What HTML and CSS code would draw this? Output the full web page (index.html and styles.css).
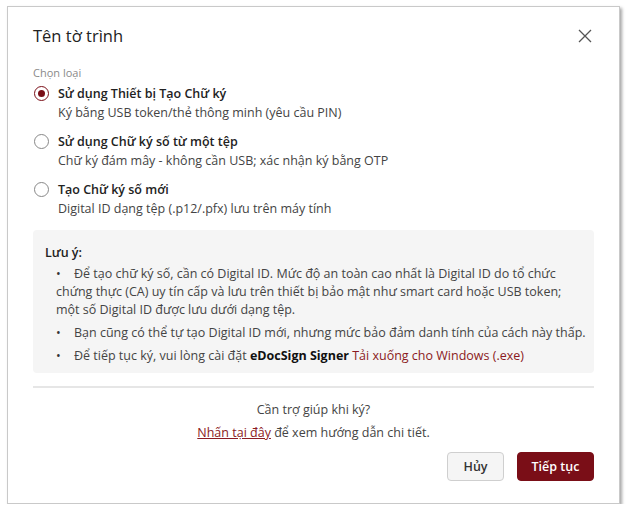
FILE: index.html
```html
<!DOCTYPE html>
<html lang="vi">
<head>
<meta charset="utf-8">
<title>Tên tờ trình</title>
<link rel="stylesheet" href="styles.css">
</head>
<body>
<div class="dialog">
  <div class="header">
    <h1 class="title">Tên tờ trình</h1>
    <button class="close" aria-label="Đóng">
      <svg width="14" height="14" viewBox="0 0 14 14"><path d="M1 1L13 13M13 1L1 13" stroke="#555" stroke-width="1.3" fill="none"/></svg>
    </button>
  </div>
  <div class="body">
    <div class="field-label">Chọn loại</div>
    <div class="options">
      <div class="option">
        <span class="radio checked"></span>
        <div class="opt-text">
          <div class="opt-title">Sử dụng Thiết bị Tạo Chữ ký</div>
          <div class="opt-desc">Ký bằng USB token/thẻ thông minh (yêu cầu PIN)</div>
        </div>
      </div>
      <div class="option">
        <span class="radio"></span>
        <div class="opt-text">
          <div class="opt-title">Sử dụng Chữ ký số từ một tệp</div>
          <div class="opt-desc">Chữ ký đám mây - không cần USB; xác nhận ký bằng OTP</div>
        </div>
      </div>
      <div class="option">
        <span class="radio"></span>
        <div class="opt-text">
          <div class="opt-title">Tạo Chữ ký số mới</div>
          <div class="opt-desc">Digital ID dạng tệp (.p12/.pfx) lưu trên máy tính</div>
        </div>
      </div>
    </div>
    <div class="note">
      <div class="note-title">Lưu ý:</div>
      <ul class="note-list">
        <li>Để tạo chữ ký số, cần có Digital ID. Mức độ an toàn cao nhất là Digital ID do tổ chức chứng thực (CA) uy tín cấp và lưu trên thiết bị bảo mật như smart card hoặc USB token; một số Digital ID được lưu dưới dạng tệp.</li>
        <li>Bạn cũng có thể tự tạo Digital ID mới, nhưng mức bảo đảm danh tính của cách này thấp.</li>
        <li>Để tiếp tục ký, vui lòng cài đặt <strong>eDocSign Signer</strong> <a class="link" href="#">Tải xuống cho Windows (.exe)</a></li>
      </ul>
    </div>
    <div class="divider"></div>
    <div class="help">
      <div>Cần trợ giúp khi ký?</div>
      <div><a class="link underline" href="#">Nhấn tại đây</a> để xem hướng dẫn chi tiết.</div>
    </div>
    <div class="actions">
      <button class="btn btn-secondary">Hủy</button>
      <button class="btn btn-primary">Tiếp tục</button>
    </div>
  </div>
</div>
</body>
</html>
```
FILE: styles.css
```css
* { box-sizing: border-box; }
html, body { margin: 0; padding: 0; background: #fff; }
body {
  font-family: "Open Sans", "Noto Sans", sans-serif;
  color: #333;
  font-size: 12.5px;
}
.dialog {
  margin: 6px 0 0 7px;
  width: 613px;
  height: 498px;
  border: 1px solid #c9c9c9;
  box-shadow: 2px 2px 3px rgba(0,0,0,0.35);
  background: #fff;
  display: flex;
  flex-direction: column;
}
.header {
  display: flex;
  align-items: center;
  justify-content: space-between;
  padding: 18px 25px 0 25px;
}
.title {
  margin: 0;
  font-size: 16.5px;
  font-weight: 400;
  line-height: 22px;
  color: #222;
}
.close {
  border: 0;
  background: none;
  padding: 0;
  margin-right: 2px;
  width: 14px;
  height: 14px;
  display: flex;
}
.body {
  padding: 18px 25px 22px 25px;
  display: flex;
  flex-direction: column;
  flex: 1;
}
.field-label {
  font-size: 11px;
  line-height: 16px;
  color: #8a8a8a;
}
.options {
  display: flex;
  flex-direction: column;
  gap: 10px;
  margin-top: 3px;
}
.option {
  display: flex;
  align-items: flex-start;
  gap: 9px;
}
.radio {
  flex: none;
  width: 15px;
  height: 15px;
  margin: 2px 0 0 1px;
  border: 1px solid #888;
  border-radius: 50%;
  background: #fff;
  position: relative;
}
.radio.checked {
  border: 1.5px solid #7a0e17;
}
.radio.checked::after {
  content: "";
  position: absolute;
  left: 2.5px;
  top: 2.5px;
  width: 7px;
  height: 7px;
  border-radius: 50%;
  background: #7a0e17;
}
.opt-text { line-height: 19px; }
.opt-title { font-weight: 600; color: #222; }
.opt-desc { color: #444; }
.note {
  margin-top: 12px;
  background: #f5f5f5;
  border-radius: 4px;
  padding: 14px 7px 8px 12px;
  line-height: 18px;
}
.note-title { font-weight: 600; color: #222; }
.note-list {
  list-style: none;
  margin: 3px 0 0 0;
  padding: 0 0 0 11px;
  color: #444;
}
.note-list li + li { margin-top: 5px; }
.note-list li::before {
  content: "•";
  display: inline-block;
  width: 18px;
  color: #333;
}
.note-list strong { color: #111; font-weight: 700; }
.link { color: #8b1a22; text-decoration: none; }
.link.underline { text-decoration: underline; }
.divider {
  margin-top: 13px;
  height: 2px;
  background: #e6e6e6;
}
.help {
  margin-top: 10px;
  text-align: center;
  line-height: 23px;
  color: #444;
}
.actions {
  margin-top: auto;
  display: flex;
  justify-content: flex-end;
  gap: 13px;
}
.btn {
  font-family: inherit;
  font-size: 12.5px;
  font-weight: 600;
  height: 29px;
  border-radius: 4px;
  padding: 0;
  white-space: nowrap;
  cursor: pointer;
}
.btn-secondary {
  width: 57px;
  background: #f5f5f5;
  border: 1px solid #cfcfcf;
  color: #333;
}
.btn-primary {
  width: 77px;
  background: #7a0e17;
  border: 1px solid #7a0e17;
  color: #fff;
}
```
